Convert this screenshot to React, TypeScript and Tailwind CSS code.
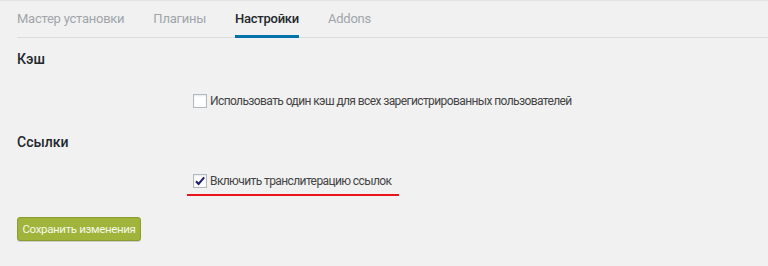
import React from 'react';

const tabs = ['Мастер установки', 'Плагины', 'Настройки', 'Addons'];

const Checkbox: React.FC<{ checked?: boolean }> = ({ checked }) => (
    <span className="w-[14px] h-[14px] border border-[#b4b9be] bg-white shadow-[inset_0_1px_2px_rgba(0,0,0,0.1)] flex items-center justify-center shrink-0">
        {checked && (
            <svg width="12" height="12" viewBox="0 0 12 12">
                <path d="M2 6.2l2.6 2.8L10.2 2.4" fill="none" stroke="#1e1e6e" strokeWidth="2" />
            </svg>
        )}
    </span>
);

const App: React.FC = () => {
    return (
        <div className="w-[768px] h-[266px] bg-[#f1f1f1] border-t border-[#e3e3e3] overflow-hidden font-['Roboto',sans-serif] text-[#444] whitespace-nowrap">
            <div className="ml-[17px] h-[37px] border-b border-[#dcdcdc] flex gap-[29px] items-stretch text-[13px] tracking-[-0.25px]">
                {tabs.map((tab, i) => (
                    <div
                        key={tab}
                        className={
                            i === 2
                                ? 'flex items-center pt-[1px] border-b-[3px] border-[#0073aa] font-medium text-[#23282d] -mb-[1px]'
                                : 'flex items-center pt-[1px] border-b-[3px] border-transparent text-[#a0a5aa] -mb-[1px]'
                        }
                    >
                        {tab}
                    </div>
                ))}
            </div>

            <div className="pl-[17px]">
                <h2 className="mt-[11px] text-[14px] leading-[20px] font-medium text-[#23282d]">Кэш</h2>
                <label className="mt-[23px] ml-[176px] flex items-center gap-[3px] text-[12px] tracking-[-0.6px] leading-[18px]">
                    <Checkbox />
                    <span>Использовать один кэш для всех зарегистрированных пользователей</span>
                </label>

                <h2 className="mt-[22px] text-[14px] leading-[20px] font-medium text-[#23282d]">Ссылки</h2>
                <div className="mt-[20px] ml-[170px] w-[212px]">
                    <label className="ml-[6px] flex items-center gap-[3px] text-[12px] tracking-[-0.6px] leading-[18px]">
                        <Checkbox checked />
                        <span>Включить транслитерацию ссылок</span>
                    </label>
                    <div className="mt-[4px] h-[2px] bg-[#e8151b]" />
                </div>

                <button className="mt-[21px] h-[24px] w-[124px] rounded-[3px] bg-[#a0b43c] border border-[#8a9c2e] text-[#f6f9e8] text-[11.5px] tracking-[-0.35px] leading-[22px] shadow-[0_1px_0_rgba(0,0,0,0.15)]">
                    Сохранить изменения
                </button>
            </div>
        </div>
    );
};

export default App;
